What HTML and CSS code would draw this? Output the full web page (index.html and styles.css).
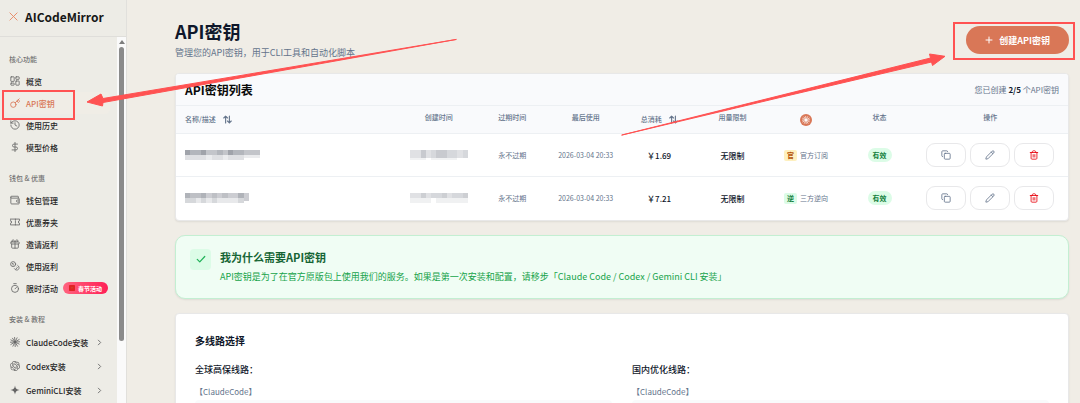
FILE: index.html
```html
<!DOCTYPE html>
<html lang="zh-CN">
<head>
<meta charset="utf-8">
<meta name="viewport" content="width=device-width, initial-scale=1">
<title>AICodeMirror - API密钥</title>
<link rel="stylesheet" href="styles.css">
</head>
<body>
<svg class="sprite" aria-hidden="true">
  <symbol id="sort" viewBox="0 0 24 24"><path d="M7 21V3M2 8l5-5 5 5M17 3v18M12 16l5 5 5-5"/></symbol>
  <symbol id="copy" viewBox="0 0 24 24"><rect x="8" y="8" width="14" height="14" rx="2"/><path d="M4 16c-1.100 0-2-.9-2-2V4c0-1.100.9-2 2-2h10c1.100 0 2 .9 2 2"/></symbol>
  <symbol id="pencil" viewBox="0 0 24 24"><path d="M21.200 6.800a1 1 0 0 0-4-4L3.800 16.200a2 2 0 0 0-.5.8L2 21.400a.5.5 0 0 0 .6.6l4.400-1.300a2 2 0 0 0 .8-.5zM15 5l4 4"/></symbol>
  <symbol id="trash" viewBox="0 0 24 24"><path d="M3 6h18M19 6v14c0 1-1 2-2 2H7c-1 0-2-1-2-2V6M8 6V4c0-1 1-2 2-2h4c1 0 2 1 2 2v2M10 11v6M14 11v6"/></symbol>
  <symbol id="chevron" viewBox="0 0 24 24"><path d="M8 4l8 8-8 8"/></symbol>
  <symbol id="burst" viewBox="0 0 24 24"><path d="M12 12L11 1M12 12L17 2M12 12L22 6M12 12L23 11.500M12 12L22 17M12 12L18 22M12 12L12.500 23M12 12L7 22M12 12L2 18M12 12L1 12.500M12 12L2 7M12 12L6 3"/></symbol>
</svg>
<div class="app">
  <aside class="sidebar">
    <div class="brand">
      <svg class="brand-mark" viewBox="0 0 10 10" aria-hidden="true"><path d="M1 1l8 8M9 1L5.600 4.400M4.400 5.600L1 9"/></svg>
      <span>AICodeMirror</span>
    </div>
    <div class="sidebar-body">
      <nav class="nav">
        <h2 class="nav-label">核心功能</h2>
        <a class="nav-item" href="#"><svg class="icon" viewBox="0 0 24 24"><rect x="2" y="2" width="8" height="11" rx="1"/><rect x="14" y="2" width="8" height="6" rx="1"/><rect x="14" y="12" width="8" height="10" rx="1"/><rect x="2" y="17" width="8" height="5" rx="1"/></svg>概览</a>
        <a class="nav-item active" href="#"><svg class="icon" viewBox="0 0 24 24"><circle cx="8" cy="16" r="6.500"/><path d="M12.500 11.500L22 2M17 7l3 4 3-3-3-4"/></svg>API密钥</a>
        <a class="nav-item" href="#"><svg class="icon" viewBox="0 0 24 24"><path d="M2 12a10 10 0 1 0 10-10 10.800 10.800 0 0 0-7.500 3L2 7.500M2 2v5.500h5.500M12 6.500V12l4.500 2.500"/></svg>使用历史</a>
        <a class="nav-item" href="#"><svg class="icon" viewBox="0 0 24 24"><path d="M12 1v22M18 5H9.500a3.500 3.500 0 0 0 0 7h5a3.500 3.500 0 0 1 0 7H5"/></svg>模型价格</a>

        <h2 class="nav-label">钱包 &amp; 优惠</h2>
        <a class="nav-item" href="#"><svg class="icon" viewBox="0 0 24 24"><path d="M20 7V4a1 1 0 0 0-1-1H4a2 2 0 0 0 0 4.500h16.500a1.500 1.500 0 0 1 1.500 1.500v11a1.500 1.500 0 0 1-1.500 1.500H4a2 2 0 0 1-2-2V5M22 12h-4a2.500 2.500 0 0 0 0 5h4"/></svg>钱包管理</a>
        <a class="nav-item" href="#"><svg class="icon" viewBox="0 0 24 24"><path d="M1 9a3 3 0 0 1 0 6v4h22v-4a3 3 0 0 1 0-6V5H1zM13 5v3M13 10.500v3M13 16v3"/></svg>优惠券夹</a>
        <a class="nav-item" href="#"><svg class="icon" viewBox="0 0 24 24"><rect x="2" y="7" width="20" height="5" rx="1"/><path d="M12 7v15M20 12v8a2 2 0 0 1-2 2H6a2 2 0 0 1-2-2v-8M7.500 7a2.500 2.500 0 0 1 0-5C10 2 12 7 12 7s2-5 4.500-5a2.500 2.500 0 0 1 0 5"/></svg>邀请返利</a>
        <a class="nav-item" href="#"><svg class="icon" viewBox="0 0 24 24"><circle cx="7.500" cy="7.500" r="6"/><path d="M6 6h1.500v4M18.500 10.500a6 6 0 1 1-8 8M16.500 14.500l1 1-2.500 3"/></svg>使用返利</a>
        <a class="nav-item" href="#"><svg class="icon" viewBox="0 0 24 24"><circle cx="12" cy="14" r="8.500"/><path d="M9 1.500h6M12 14l3.500-3.500"/></svg>限时活动
          <span class="promo"><svg class="envelope" viewBox="0 0 8 8"><rect width="8" height="8" rx="1"/><circle cx="4" cy="3.500" r="1"/></svg>春节活动</span></a>

        <h2 class="nav-label">安装 &amp; 教程</h2>
        <a class="nav-item tall" href="#"><svg class="icon"><use href="#burst"/></svg><span class="grow">ClaudeCode安装</span><svg class="chevron"><use href="#chevron"/></svg></a>
        <a class="nav-item tall" href="#"><svg class="icon solid" viewBox="0 0 24 24"><path d="M22.2819 9.8211a5.9847 5.9847 0 0 0-.5157-4.9108 6.0462 6.0462 0 0 0-6.5098-2.9A6.0651 6.0651 0 0 0 4.9807 4.1818a5.9847 5.9847 0 0 0-3.9977 2.9 6.0462 6.0462 0 0 0 .7427 7.0966 5.98 5.98 0 0 0 .511 4.9107 6.051 6.051 0 0 0 6.5146 2.9001A5.9847 5.9847 0 0 0 13.2599 24a6.0557 6.0557 0 0 0 5.7718-4.2058 5.9894 5.9894 0 0 0 3.9977-2.9001 6.0557 6.0557 0 0 0-.7475-7.0729zm-9.022 12.6081a4.4755 4.4755 0 0 1-2.8764-1.0408l.1419-.0804 4.7783-2.7582a.7948.7948 0 0 0 .3927-.6813v-6.7369l2.02 1.1686a.071.071 0 0 1 .038.052v5.5826a4.504 4.504 0 0 1-4.4945 4.4944zm-9.6607-4.1254a4.4708 4.4708 0 0 1-.5346-3.0137l.142.0852 4.783 2.7582a.7712.7712 0 0 0 .7806 0l5.8428-3.3685v2.3324a.0804.0804 0 0 1-.0332.0615L9.74 19.9502a4.4992 4.4992 0 0 1-6.1408-1.6464zM2.3408 7.8956a4.485 4.485 0 0 1 2.3655-1.9728V11.6a.7664.7664 0 0 0 .3879.6765l5.8144 3.3543-2.0201 1.1685a.0757.0757 0 0 1-.071 0l-4.8303-2.7865A4.504 4.504 0 0 1 2.3408 7.872zm16.5963 3.8558L13.1038 8.364 15.1192 7.2a.0757.0757 0 0 1 .071 0l4.8303 2.7913a4.4944 4.4944 0 0 1-.6765 8.1042v-5.6772a.79.79 0 0 0-.407-.667zm2.0107-3.0231l-.142-.0852-4.7735-2.7818a.7759.7759 0 0 0-.7854 0L9.409 9.2297V6.8974a.0662.0662 0 0 1 .0284-.0615l4.8303-2.7866a4.4992 4.4992 0 0 1 6.6802 4.66zM8.3065 12.863l-2.02-1.1638a.0804.0804 0 0 1-.038-.0567V6.0742a4.4992 4.4992 0 0 1 7.3757-3.4537l-.142.0805L8.704 5.459a.7948.7948 0 0 0-.3927.6813zm1.0976-2.3654l2.602-1.4998 2.6069 1.4998v2.9994l-2.5974 1.4997-2.6067-1.4997Z"/></svg><span class="grow">Codex安装</span><svg class="chevron"><use href="#chevron"/></svg></a>
        <a class="nav-item tall" href="#"><svg class="icon solid" viewBox="0 0 24 24"><path d="M12 1c1 7 4 10 11 11-7 1-10 4-11 11-1-7-4-10-11-11 7-1 10-4 11-11z"/></svg><span class="grow">GeminiCLI安装</span><svg class="chevron"><use href="#chevron"/></svg></a>
      </nav>
      <div class="scrollbar" aria-hidden="true">
        <svg class="scroll-up" viewBox="0 0 6 4"><path d="M3 0l3 4H0z"/></svg>
        <div class="scroll-thumb"></div>
      </div>
    </div>
  </aside>

  <main class="main">
    <header class="page-head">
      <div>
        <h1 class="page-title">API密钥</h1>
        <p class="page-sub">管理您的API密钥，用于CLI工具和自动化脚本</p>
      </div>
      <button class="create" type="button"><svg class="plus" viewBox="0 0 8 8"><path d="M4 1v6M1 4h6"/></svg>创建API密钥</button>
    </header>

    <section class="card keys">
      <div class="card-head">
        <h2 class="card-title">API密钥列表</h2>
        <p class="quota">您已创建 <b>2/5</b> 个API密钥</p>
      </div>
      <table class="table">
        <thead>
          <tr>
            <th class="col-name"><button class="sort" type="button">名称/描述<svg><use href="#sort"/></svg></button></th>
            <th>创建时间</th>
            <th>过期时间</th>
            <th>最后使用</th>
            <th><button class="sort" type="button">总消耗<svg><use href="#sort"/></svg></button></th>
            <th>用量限制</th>
            <th><span class="claude"><svg><use href="#burst"/></svg></span></th>
            <th>状态</th>
            <th class="col-actions">操作</th>
          </tr>
        </thead>
        <tbody>
          <tr>
            <td class="col-name"><svg class="mosaic name-long" viewBox="0 0 14 4" preserveAspectRatio="none"><path fill="#a0a3aa" d="M0 0h1v2H0zM3 0h1v2H3zM8 0h1v2H8z"/><path fill="#b3b6bc" d="M1 0h2v2H1zM6 0h1v2H6zM9 0h2v2H9z"/><path fill="#c3c5ca" d="M4 0h2v2H4zM7 0h1v2H7zM11 0h3v2h-3z"/><path fill="#dfe0e3" d="M0 2h4v2H0zM5 2h2v2H5zM8 2h3v2H8z"/><path fill="#ebecee" d="M4 2h1v2H4zM7 2h1v2H7zM11 2h3v1h-3z"/></svg></td>
            <td><svg class="mosaic date" viewBox="0 0 11 4" preserveAspectRatio="none"><path fill="#e0e1e4" d="M0 0h2v3H0zM3 0h1v3H3zM9 0h1v3H9z"/><path fill="#c8cacf" d="M2 0h1v3H2zM5 0h2v3H5z"/><path fill="#d6d8dc" d="M4 0h1v3H4zM7 0h2v3H7zM10 0h1v3h-1z"/><path fill="#f1f2f3" d="M0 3h3v1H0zM4 3h5v1H4z"/></svg></td>
            <td>永不过期</td>
            <td>2026-03-04 20:33</td>
            <td class="strong">￥1.69</td>
            <td class="strong">无限制</td>
            <td><span class="source"><span class="tag amber">官</span>官方订阅</span></td>
            <td><span class="status">有效</span></td>
            <td class="col-actions"><div class="actions">
              <button type="button" aria-label="复制"><svg><use href="#copy"/></svg></button>
              <button type="button" aria-label="编辑"><svg><use href="#pencil"/></svg></button>
              <button class="danger" type="button" aria-label="删除"><svg><use href="#trash"/></svg></button>
            </div></td>
          </tr>
          <tr>
            <td class="col-name"><svg class="mosaic name-short" viewBox="0 0 12 4" preserveAspectRatio="none"><path fill="#b0b3b9" d="M0 0h1v2H0zM3 0h1v2H3zM10 0h1v2h-1z"/><path fill="#bec0c5" d="M1 0h2v2H1zM5 0h1v2H5zM7 0h1v2H7z"/><path fill="#cccdd2" d="M4 0h1v2H4zM6 0h1v2H6zM8 0h2v2H8zM11 0h1v3h-1z"/><path fill="#d6d8db" d="M0 2h2v2H0zM3 2h1v2H3zM5 2h1v2H5zM10 2h1v2h-1z"/><path fill="#e8e9eb" d="M2 2h1v2H2zM4 2h1v2H4zM6 2h4v2H6z"/></svg></td>
            <td><svg class="mosaic date" viewBox="0 0 11 4" preserveAspectRatio="none"><path fill="#e0e1e4" d="M0 0h2v2H0zM3 0h1v2H3zM7 0h1v2H7z"/><path fill="#cdcfd3" d="M2 0h1v2H2zM6 0h1v2H6zM10 0h1v2h-1z"/><path fill="#d6d8dc" d="M4 0h2v2H4zM8 0h2v2H8z"/><path fill="#f0f1f2" d="M0 2h4v2H0zM5 2h6v2H5z"/></svg></td>
            <td>永不过期</td>
            <td>2026-03-04 20:33</td>
            <td class="strong">￥7.21</td>
            <td class="strong">无限制</td>
            <td><span class="source"><span class="tag green">逆</span>三方逆向</span></td>
            <td><span class="status">有效</span></td>
            <td class="col-actions"><div class="actions">
              <button type="button" aria-label="复制"><svg><use href="#copy"/></svg></button>
              <button type="button" aria-label="编辑"><svg><use href="#pencil"/></svg></button>
              <button class="danger" type="button" aria-label="删除"><svg><use href="#trash"/></svg></button>
            </div></td>
          </tr>
        </tbody>
      </table>
    </section>

    <section class="notice">
      <span class="notice-icon"><svg viewBox="0 0 24 24"><path d="M3 13l6 6L21 6"/></svg></span>
      <div>
        <h2 class="notice-title">我为什么需要API密钥</h2>
        <p class="notice-text">API密钥是为了在官方原版包上使用我们的服务。如果是第一次安装和配置，请移步「Claude Code / Codex / Gemini CLI 安装」</p>
      </div>
    </section>

    <section class="card routes">
      <h2 class="routes-title">多线路选择</h2>
      <div class="routes-grid">
        <div>
          <h3 class="route-name">全球高保线路：</h3>
          <p class="route-tool">【ClaudeCode】</p>
          <div class="route-url"></div>
        </div>
        <div>
          <h3 class="route-name">国内优化线路：</h3>
          <p class="route-tool">【ClaudeCode】</p>
          <div class="route-url"></div>
        </div>
      </div>
    </section>
  </main>
</div>

<svg class="callouts" width="1080" height="403" viewBox="0 0 1080 403" aria-hidden="true">
  <rect x="3" y="91" width="71" height="28"/>
  <rect x="954" y="23" width="120" height="36"/>
  <path d="M456 39.500L103 98.500L101 94L87 102L102.500 106L103 102.500L240 78Z"/>
  <path d="M622 135L930.500 58L929.500 54L945 56.300L932.500 65.500L931.500 62L780 97.500Z"/>
</svg>
</body>
</html>
```

FILE: styles.css
```css
* {
  box-sizing: border-box;
}

body,
h1,
h2,
h3,
p {
  margin: 0;
}

body {
  font-family: "Noto Sans CJK SC", "Noto Sans", sans-serif;
  font-size: 8px;
  color: #0f172a;
  background: #f0ede6;
  overflow: hidden;
}

button {
  font: inherit;
  color: inherit;
  cursor: pointer;
}

svg {
  display: block;
  flex: none;
  fill: none;
  stroke: currentColor;
  stroke-width: 2;
  stroke-linecap: round;
  stroke-linejoin: round;
}

.sprite {
  position: absolute;
  width: 0;
  height: 0;
}

.app {
  display: flex;
  height: 100vh;
  overflow: hidden;
}

/* Sidebar */
.sidebar {
  display: flex;
  flex: none;
  flex-direction: column;
  width: 127px;
  background: #edece6;
  border-right: 1px solid #e1e0dc;
}

.brand {
  display: flex;
  flex: none;
  align-items: center;
  gap: 7px;
  height: 37px;
  padding: 0 9px 4px;
  border-bottom: 1px solid #dfdeda;
  color: #171717;
  font-size: 12px;
  font-weight: 700;
}

.brand-mark {
  width: 9px;
  height: 9px;
  color: #e8845f;
  stroke-width: 1;
}

.sidebar-body {
  display: flex;
  flex: 1;
  min-height: 0;
}

.nav {
  flex: 1;
  padding: 16px 7px 0 5px;
  overflow: hidden;
}

.nav-label {
  margin: 14px 0 5px;
  padding-left: 4px;
  color: #737373;
  font-size: 7px;
  font-weight: 500;
  line-height: 12px;
}

.nav-label:first-child {
  margin-top: 0;
}

.nav-item {
  display: flex;
  align-items: center;
  gap: 6px;
  height: 22px;
  padding: 0 3px 0 5px;
  border-radius: 5px;
  color: #262626;
  font-weight: 500;
  text-decoration: none;
  white-space: nowrap;
}

.nav-item.tall {
  height: 24px;
}

.nav-item.active {
  color: #d97757;
  background: #f0ede6;
}

.icon {
  width: 10px;
  height: 10px;
  color: #666;
}

.active .icon {
  color: inherit;
}

.solid {
  fill: currentColor;
  stroke: none;
}

.grow {
  flex: 1;
}

.chevron {
  width: 7px;
  height: 7px;
  margin-right: 4px;
  color: #666;
  stroke-width: 3;
}

.promo {
  display: flex;
  align-items: center;
  gap: 3px;
  height: 12px;
  margin-left: -1px;
  padding: 0 6px;
  border-radius: 6px;
  color: #fff;
  background: linear-gradient(90deg, #ff637e, #ff2056);
  font-size: 6px;
  font-weight: 700;
}

.envelope {
  width: 6px;
  height: 6px;
  fill: #e02424;
  stroke: none;
}

.envelope circle {
  fill: #c2562d;
}

.scrollbar {
  display: flex;
  flex-direction: column;
  align-items: center;
  gap: 3px;
  width: 9px;
  padding-top: 3px;
  background: #fafafa;
}

.scroll-up {
  width: 6px;
  height: 4px;
  fill: #7d7d7d;
  stroke: none;
}

.scroll-thumb {
  width: 5px;
  height: 81%;
  border-radius: 3px;
  background: #8b8b8b;
}

/* Page */
.main {
  display: flex;
  flex: 1;
  flex-direction: column;
  gap: 14px;
  min-width: 0;
  padding: 19px 11px 0 48px;
}

.page-head {
  display: flex;
  flex: none;
  justify-content: space-between;
  height: 40px;
}

.page-title {
  font-size: 18px;
  font-weight: 700;
  line-height: 24px;
}

.page-sub {
  margin-top: 3px;
  color: #64748b;
  font-size: 9px;
  line-height: 14px;
}

.create {
  display: flex;
  align-items: center;
  gap: 6px;
  height: 28px;
  margin-top: 7px;
  padding: 0 19px;
  border: 0;
  border-radius: 14px;
  color: #fff;
  background: #d97757;
  font-size: 9px;
  font-weight: 700;
}

.plus {
  width: 8px;
  height: 8px;
  stroke-width: 1;
}

.card {
  flex: none;
  border: 1px solid #e8e8e8;
  border-radius: 4px;
  background: #fff;
  box-shadow: 0 1px 2px rgba(0, 0, 0, 0.08);
  overflow: hidden;
}

.card-head {
  display: flex;
  align-items: center;
  justify-content: space-between;
  height: 32px;
  padding: 0 9px;
  border-bottom: 1px solid #edf0f3;
  background: #f9fafc;
}

.card-title {
  color: #0a0a0a;
  font-size: 12px;
  font-weight: 700;
}

.quota {
  color: #64748b;
}

.quota b {
  color: #0f172a;
}

/* Key table */
.table {
  width: 100%;
  table-layout: fixed;
  border-collapse: collapse;
  color: #64748b;
  font-size: 7px;
  text-align: center;
}

.table th {
  padding: 6px 0;
  background: #f9fafc;
  font-weight: 500;
  line-height: 11px;
  vertical-align: top;
}

.table td {
  height: 43px;
  padding: 0;
  border-top: 1px solid #edf0f3;
  white-space: nowrap;
}

.table .col-name {
  width: 226px;
  padding-left: 9px;
  text-align: left;
}

.table .col-actions {
  width: 17%;
  padding-right: 4px;
}

.sort {
  display: inline-flex;
  align-items: center;
  gap: 7px;
  height: 15px;
  padding: 0;
  border: 0;
  background: none;
  vertical-align: top;
}

.sort svg {
  width: 9px;
  height: 9px;
  stroke-width: 3;
}

.claude {
  display: flex;
  align-items: center;
  justify-content: center;
  width: 12px;
  height: 12px;
  margin: 2px auto 0;
  border-radius: 50%;
  color: #fff;
  background: #d97757;
}

.claude svg {
  width: 8px;
  height: 8px;
}

.table .strong {
  color: #0f172a;
  font-size: 8px;
  font-weight: 500;
}

.mosaic {
  height: 10px;
  stroke: none;
  shape-rendering: crispEdges;
}

.name-long {
  width: 75px;
}

.name-short {
  width: 64px;
}

.date {
  width: 58px;
  margin: 0 auto;
}

.source {
  display: inline-flex;
  align-items: center;
  gap: 3px;
}

.tag {
  padding: 0 3px;
  border-radius: 2px;
  font-weight: 700;
  line-height: 11px;
}

.amber {
  color: #b45309;
  background: #fef0bf;
}

.green {
  color: #15803d;
  background: #dcfce7;
}

.status {
  display: inline-block;
  padding: 0 5px;
  border-radius: 7px;
  color: #15803d;
  background: #dcfce7;
  font-weight: 700;
  line-height: 14px;
}

.actions {
  display: flex;
  justify-content: center;
  gap: 4px;
}

.actions button {
  display: flex;
  align-items: center;
  justify-content: center;
  width: 40px;
  height: 24px;
  padding: 0;
  border: 1px solid #e8e8ea;
  border-radius: 9px;
  background: #fff;
}

.actions svg {
  width: 10px;
  height: 10px;
}

.actions .danger {
  color: #e7000b;
}

/* Notice */
.notice {
  display: flex;
  flex: none;
  gap: 9px;
  padding: 13px 14px;
  border: 1px solid #c3efd2;
  border-radius: 10px;
  background: #f0fdf4;
  box-shadow: 0 1px 2px rgba(0, 0, 0, 0.08);
}

.notice-icon {
  display: flex;
  align-items: center;
  justify-content: center;
  width: 21px;
  height: 21px;
  border-radius: 4px;
  color: #22b35a;
  background: #dcfce7;
}

.notice-icon svg {
  width: 10px;
  height: 10px;
  stroke-width: 3;
}

.notice-title {
  color: #166534;
  font-size: 11px;
  font-weight: 700;
  line-height: 17px;
}

.notice-text {
  margin-top: 3px;
  color: #16a34a;
  font-size: 9px;
  line-height: 16px;
}

/* Routes */
.routes {
  padding: 19px;
}

.routes-title {
  font-size: 10px;
  font-weight: 700;
  line-height: 16px;
}

.routes-grid {
  display: grid;
  grid-template-columns: 1fr 1fr;
  gap: 20px;
  margin-top: 13px;
}

.route-name {
  font-size: 9px;
  font-weight: 500;
  line-height: 16px;
}

.route-tool {
  margin: 7px 0 2px;
  color: #64748b;
  line-height: 13px;
}

.route-url {
  height: 16px;
  border-radius: 4px;
  background: #f9fafb;
}

/* Red callouts drawn over the page */
.callouts {
  position: absolute;
  top: 0;
  left: 0;
  color: #ff5252;
  pointer-events: none;
}

.callouts rect {
  stroke-linejoin: miter;
}

.callouts path {
  fill: currentColor;
  stroke-width: 1;
}
```
